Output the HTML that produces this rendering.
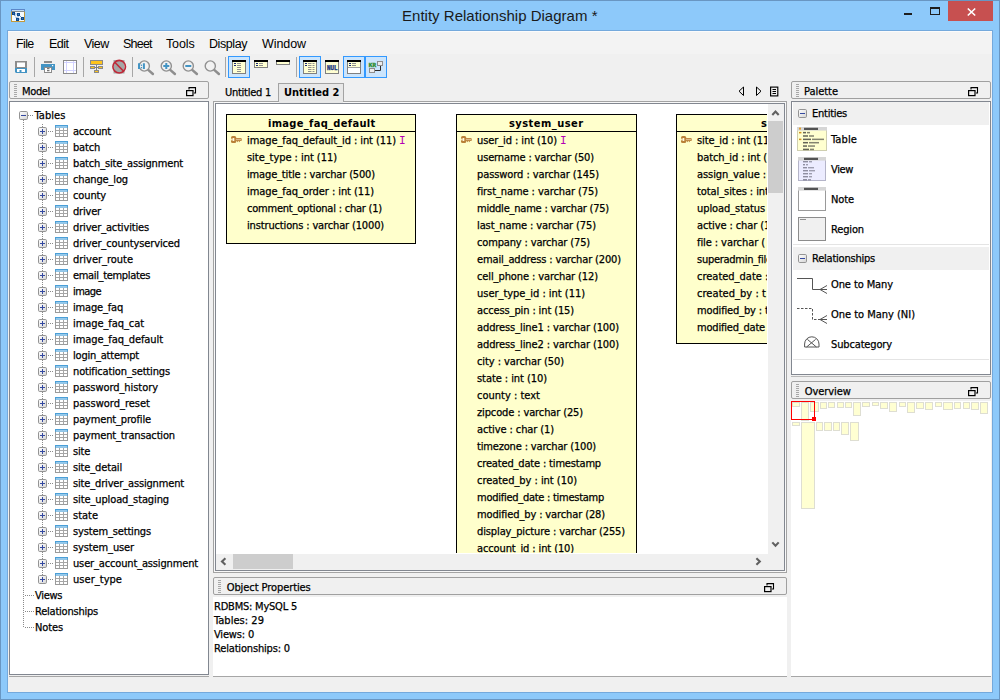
<!DOCTYPE html>
<html lang="en"><head><meta charset="utf-8"><title>Entity Relationship Diagram *</title>
<style>
html,body{margin:0;padding:0}
body{width:1000px;height:700px;overflow:hidden;background:#8dc9fa}
#win{position:absolute;left:0;top:0;width:1000px;height:700px;overflow:hidden;background:#8dc9fa;color:#000}
.a{position:absolute;box-sizing:border-box}
svg{position:absolute;overflow:visible}
.x{position:absolute;white-space:pre;color:#000}
.t{font:11px/13px "DejaVu Sans Condensed","Liberation Sans",sans-serif;-webkit-text-stroke:0.25px #000}
.tb{font:bold 11px/13px "DejaVu Sans Condensed","Liberation Sans",sans-serif}
.mo{font:11px/13px "DejaVu Sans Mono","Liberation Mono",monospace}
.m{font:12.5px/15px "Liberation Sans",sans-serif}
.ti{font:15px/18px "Liberation Sans",sans-serif;color:#1a1a1a}
.dt{border:1px solid #a0a0a0;border-radius:2px;background:#f0f0f0}
.fr{border:1px solid #828790;background:#fff}
.cb{border:1px solid #3399ff;background:#cce5fc}
.ent{border:1px solid #000;background:#ffffcc}
.ov{border:1px solid #deded2;background:#ffffd2}

</style></head><body>
<div id="win">
<div class="a" style="left:0px;top:0px;width:1000px;height:700px;border:1px solid #6996c2;"></div>
<div class="a" style="left:7px;top:30px;width:986px;height:663px;border:1px solid #74a9dc;"></div>
<div class="a" style="left:8px;top:31px;width:984px;height:661px;background:#f0f0f0;"></div>
<div class="a" style="left:8px;top:31px;width:984px;height:1px;background:#fbfbfb;"></div>
<div class="a" style="left:8px;top:32px;width:984px;height:22px;background:#f3f3f3;"></div>
<svg style="left:11px;top:9px" width="14" height="13" viewBox="0 0 14 13">
<rect x="0.5" y="2.5" width="13" height="10" fill="#f4fbff" stroke="#c49a3c"/>
<rect x="0" y="0" width="14" height="2.6" fill="#5b86c8"/>
<rect x="1" y="1" width="12" height="0.9" fill="#cfe6fa"/>
<path d="M2.5 4.5 L6.5 10.5 M7.5 5.5 L11.5 9.5 M2.5 4.5 L7.5 5.5 M7.5 5.5 L6.5 10.5 M6.5 10.5 L11.5 9.5" stroke="#0a4a90" stroke-width="0.9" stroke-dasharray="1 1" fill="none"/>
<g fill="#fff" stroke="#0a4a90" stroke-width="1.2"><rect x="1.6" y="3.6" width="1.8" height="1.8"/><rect x="6.6" y="4.6" width="1.8" height="1.8"/><rect x="5.6" y="9.6" width="1.8" height="1.8"/><rect x="10.6" y="8.6" width="1.8" height="1.8"/></g>
</svg>
<span class="x ti" style="left:402px;top:7px;letter-spacing:0.014px;">Entity Relationship Diagram *</span>
<div class="a" style="left:904px;top:13px;width:8px;height:2px;background:#1e1e1e;"></div>
<div class="a" style="left:930px;top:7px;width:10px;height:8px;border:1px solid #1e1e1e;border-top-width:2px;"></div>
<div class="a" style="left:948px;top:1px;width:45px;height:20px;background:#c75050;"></div>
<svg style="left:967px;top:8px" width="9" height="8" viewBox="0 0 9 8"><path d="M0.8 0.5 L8.2 7.5 M8.2 0.5 L0.8 7.5" stroke="#fff" stroke-width="1.6" fill="none"/></svg>
<span class="x m" style="left:16px;top:37px;letter-spacing:-0.639px;">File</span>
<span class="x m" style="left:49px;top:37px;letter-spacing:-0.512px;">Edit</span>
<span class="x m" style="left:84px;top:37px;letter-spacing:-0.569px;">View</span>
<span class="x m" style="left:123px;top:37px;letter-spacing:-0.774px;">Sheet</span>
<span class="x m" style="left:166px;top:37px;letter-spacing:-0.138px;">Tools</span>
<span class="x m" style="left:209px;top:37px;letter-spacing:-0.429px;">Display</span>
<span class="x m" style="left:262px;top:37px;letter-spacing:-0.078px;">Window</span>
<div class="a" style="left:34px;top:57px;width:1px;height:20px;background:#a7a7a7;"></div>
<div class="a" style="left:83px;top:57px;width:1px;height:20px;background:#a7a7a7;"></div>
<div class="a" style="left:132px;top:57px;width:1px;height:20px;background:#a7a7a7;"></div>
<div class="a" style="left:225px;top:57px;width:1px;height:20px;background:#a7a7a7;"></div>
<div class="a" style="left:296px;top:57px;width:1px;height:20px;background:#a7a7a7;"></div>
<div class="a cb" style="left:228px;top:56px;width:22px;height:22px"></div>
<div class="a cb" style="left:299px;top:56px;width:22px;height:22px"></div>
<div class="a cb" style="left:343px;top:56px;width:22px;height:22px"></div>
<div class="a cb" style="left:365px;top:56px;width:22px;height:22px"></div>
<svg style="left:15px;top:61px" width="12" height="12" viewBox="0 0 12 12">
<rect x="0" y="0" width="12" height="7" fill="#8c8c8c"/><rect x="2" y="1.5" width="8" height="4.5" fill="#fff"/>
<path d="M0 7 H12 V12 H1 L0 11 Z" fill="#4394c4"/><rect x="2" y="8" width="8" height="3" fill="#fff"/><rect x="4.5" y="9" width="2" height="2" fill="#4394c4"/></svg>
<svg style="left:41px;top:61px" width="14" height="12" viewBox="0 0 14 12">
<rect x="3" y="0" width="8" height="2" fill="#8c8c8c"/><rect x="0" y="3" width="14" height="6" fill="#4394c4"/>
<rect x="11" y="4" width="1.2" height="1.2" fill="#fff"/>
<rect x="3.5" y="6.5" width="7" height="5" fill="#fff" stroke="#8c8c8c"/><rect x="6" y="7.2" width="2.5" height="1" fill="#555"/><rect x="6" y="9.2" width="2.5" height="1" fill="#555"/></svg>
<svg style="left:63px;top:60px" width="14" height="14" viewBox="0 0 14 14">
<rect x="0.5" y="0.5" width="13" height="13" fill="#fff" stroke="#8a8a8a"/>
<path d="M3.5 1 V13 M10.5 1 V13 M1 2.5 H13 M1 10.5 H13" stroke="#d2d2ff" stroke-width="1"/></svg>
<svg style="left:90px;top:60px" width="13" height="13" viewBox="0 0 13 13">
<path d="M6.5 5 V10 M4 7.5 H9" stroke="#808080" stroke-width="1" fill="none"/>
<rect x="0.5" y="0.5" width="12" height="4" fill="#ffc41c" stroke="#8a8a8a"/>
<rect x="0.5" y="6.5" width="4" height="2" fill="#ffc41c" stroke="#8a8a8a"/>
<rect x="8.5" y="6.5" width="4" height="2" fill="#ffc41c" stroke="#8a8a8a"/>
<rect x="4.5" y="10.5" width="4" height="2" fill="#ffc41c" stroke="#8a8a8a"/></svg>
<svg style="left:112px;top:59px" width="15" height="15" viewBox="0 0 15 15">
<rect x="1.5" y="1" width="11" height="13.5" fill="#a6a6a6"/>
<circle cx="7.2" cy="7.7" r="6.3" fill="none" stroke="#bf2838" stroke-width="1.6"/>
<path d="M2.8 3.2 L11.6 12.2" stroke="#bf2838" stroke-width="1.6"/></svg>
<svg style="left:136px;top:58px" width="20" height="18" viewBox="0 0 20 18">
<path d="M12.2 11.9 L16.9 16" stroke="#8e8e8e" stroke-width="2.5" stroke-linecap="round"/>
<circle cx="8.3" cy="8" r="5.1" fill="#f2f2f2" stroke="#919191" stroke-width="1.4"/><path d="M3 5.2 V11 M7.9 5.2 V11" stroke="#4394c4" stroke-width="2" fill="none"/><rect x="4.8" y="6.6" width="1.3" height="1.3" fill="#4394c4"/><rect x="4.8" y="9" width="1.3" height="1.3" fill="#4394c4"/></svg>
<svg style="left:158px;top:58px" width="20" height="18" viewBox="0 0 20 18">
<path d="M12.2 11.9 L16.9 16" stroke="#8e8e8e" stroke-width="2.5" stroke-linecap="round"/>
<circle cx="8.3" cy="8" r="5.1" fill="#f2f2f2" stroke="#919191" stroke-width="1.4"/><path d="M5.3 8 H11.3 M8.3 5 V11" stroke="#4394c4" stroke-width="2" fill="none"/></svg>
<svg style="left:180px;top:58px" width="20" height="18" viewBox="0 0 20 18">
<path d="M12.2 11.9 L16.9 16" stroke="#8e8e8e" stroke-width="2.5" stroke-linecap="round"/>
<circle cx="8.3" cy="8" r="5.1" fill="#f2f2f2" stroke="#919191" stroke-width="1.4"/><path d="M5.3 8 H11.3" stroke="#4394c4" stroke-width="2" fill="none"/></svg>
<svg style="left:202px;top:58px" width="20" height="18" viewBox="0 0 20 18">
<path d="M12.2 11.9 L16.9 16" stroke="#8e8e8e" stroke-width="2.5" stroke-linecap="round"/>
<circle cx="8.3" cy="8" r="5.1" fill="#f2f2f2" stroke="#919191" stroke-width="1.4"/></svg>
<svg style="left:232px;top:60px" width="14" height="14" viewBox="0 0 14 14"><rect x="0.5" y="1.5" width="13" height="12" fill="#ffffd2" stroke="#808080"/><rect x="0" y="0" width="14" height="2" fill="#000"/><rect x="2" y="3.0" width="2" height="1" fill="#1a2a7a"/><rect x="5" y="3.0" width="4" height="1" fill="#909090"/><rect x="2" y="5.0" width="2" height="1" fill="#1a2a7a"/><rect x="5" y="5.0" width="4" height="1" fill="#909090"/><rect x="5" y="7.0" width="4" height="1" fill="#909090"/><rect x="5" y="9.0" width="4" height="1" fill="#909090"/><rect x="5" y="11.0" width="4" height="1" fill="#909090"/></svg>
<svg style="left:254px;top:60px" width="14" height="8" viewBox="0 0 14 8"><rect x="0.5" y="1.5" width="13" height="6" fill="#ffffd2" stroke="#808080"/><rect x="0" y="0" width="14" height="2" fill="#000"/><rect x="2" y="3.0" width="2" height="1" fill="#1a2a7a"/><rect x="5" y="3.0" width="4" height="1" fill="#909090"/><rect x="2" y="5.0" width="2" height="1" fill="#1a2a7a"/><rect x="5" y="5.0" width="4" height="1" fill="#909090"/></svg>
<svg style="left:276px;top:60px" width="14" height="5" viewBox="0 0 14 5"><rect x="0.5" y="1.5" width="13" height="3" fill="#ffffd2" stroke="#808080"/><rect x="0" y="0" width="14" height="2" fill="#000"/></svg>
<svg style="left:303px;top:60px" width="14" height="14" viewBox="0 0 14 14"><rect x="0.5" y="1.5" width="13" height="12" fill="#ffffd2" stroke="#808080"/><rect x="0" y="0" width="14" height="2" fill="#000"/><rect x="2" y="3.0" width="2" height="1" fill="#1a2a7a"/><rect x="5" y="3.0" width="3.5" height="1" fill="#909090"/><rect x="9.5" y="3.0" width="2" height="1" fill="#909090"/><rect x="2" y="5.0" width="2" height="1" fill="#1a2a7a"/><rect x="5" y="5.0" width="3.5" height="1" fill="#909090"/><rect x="9.5" y="5.0" width="2" height="1" fill="#909090"/><rect x="5" y="7.0" width="3.5" height="1" fill="#909090"/><rect x="9.5" y="7.0" width="2" height="1" fill="#909090"/><rect x="5" y="9.0" width="3.5" height="1" fill="#909090"/><rect x="9.5" y="9.0" width="2" height="1" fill="#909090"/><rect x="5" y="11.0" width="3.5" height="1" fill="#909090"/><rect x="9.5" y="11.0" width="2" height="1" fill="#909090"/></svg>
<svg style="left:325px;top:60px" width="14" height="14" viewBox="0 0 14 14"><rect x="0.5" y="1.5" width="13" height="12" fill="#ffffd2" stroke="#808080"/><rect x="0" y="0" width="14" height="2" fill="#000"/><text x="2" y="10" font-family="DejaVu Sans Mono,Liberation Mono,monospace" font-weight="bold" font-size="6.5" fill="#1a3580" stroke="#1a3580" stroke-width="0.35" textLength="10.4" lengthAdjust="spacingAndGlyphs">NUL</text></svg>
<svg style="left:347px;top:60px" width="14" height="14" viewBox="0 0 14 14"><rect x="0.5" y="1.5" width="13" height="12" fill="#ffffd2" stroke="#808080"/><rect x="1" y="7" width="12" height="6" fill="#fff"/><path d="M1 7.5 H13" stroke="#a0a0a0" stroke-width="1"/><rect x="0" y="0" width="14" height="2" fill="#000"/><rect x="2" y="3.0" width="2" height="1" fill="#1a2a7a"/><rect x="5" y="3.0" width="4" height="1" fill="#909090"/><rect x="2" y="5.0" width="2" height="1" fill="#1a2a7a"/><rect x="5" y="5.0" width="4" height="1" fill="#909090"/></svg>
<svg style="left:368px;top:60px" width="16" height="14" viewBox="0 0 16 14">
<path d="M7 10.5 H12.5 V5.5" stroke="#2a2a2a" stroke-width="1" fill="none"/>
<rect x="9.5" y="1.5" width="5" height="4" fill="#ececec" stroke="#8e8e8e"/>
<rect x="1.5" y="8.5" width="5" height="4" fill="#ececec" stroke="#8e8e8e"/>
<text x="0.8" y="7" font-family="DejaVu Sans Mono,Liberation Mono,monospace" font-weight="bold" font-size="5.6" fill="#2a8a2a" stroke="#2a8a2a" stroke-width="0.3" textLength="7.4" lengthAdjust="spacingAndGlyphs">KR</text></svg>
<div class="a dt" style="left:9px;top:81px;width:200px;height:18px"></div>
<div class="a" style="left:14px;top:84px;width:3px;height:1px;background:#a8a8a8;"></div>
<div class="a" style="left:14px;top:86px;width:3px;height:1px;background:#a8a8a8;"></div>
<div class="a" style="left:14px;top:88px;width:3px;height:1px;background:#a8a8a8;"></div>
<div class="a" style="left:14px;top:90px;width:3px;height:1px;background:#a8a8a8;"></div>
<div class="a" style="left:14px;top:92px;width:3px;height:1px;background:#a8a8a8;"></div>
<div class="a" style="left:14px;top:94px;width:3px;height:1px;background:#a8a8a8;"></div>
<div class="a" style="left:14px;top:96px;width:3px;height:1px;background:#a8a8a8;"></div>
<span class="x t" style="left:22px;top:85px;letter-spacing:-0.344px;">Model</span>
<svg style="left:186px;top:87px" width="11" height="10" viewBox="0 0 11 10">
<path d="M3 2.4 V0.6 H9.5 V6 H8" stroke="#000" stroke-width="1.1" fill="none"/>
<rect x="0.6" y="3.6" width="6.4" height="5" fill="none" stroke="#000" stroke-width="1.2"/></svg>
<div class="a fr" style="left:9px;top:101px;width:200px;height:574px"></div>
<div class="a" style="left:23px;top:120px;width:1px;height:508px;background-image:linear-gradient(to bottom,#8a8a8a 50%,transparent 50%);background-size:1px 2px;"></div>
<svg style="left:19px;top:111px" width="9" height="9" viewBox="0 0 9 9"><defs><linearGradient id="g19_111" x1="0" y1="0" x2="1" y2="1"><stop offset="0" stop-color="#fff"/><stop offset="1" stop-color="#d4d4d4"/></linearGradient></defs><rect x="0.5" y="0.5" width="8" height="8" rx="1.2" fill="url(#g19_111)" stroke="#949494"/><path d="M2 4.5 H7" stroke="#3449a0" stroke-width="1"/></svg>
<div class="a" style="left:28px;top:115px;width:6px;height:1px;background-image:linear-gradient(to right,#8a8a8a 50%,transparent 50%);background-size:2px 1px;"></div>
<span class="x t" style="left:34.5px;top:109px;letter-spacing:0.070px;">Tables</span>
<div class="a" style="left:42px;top:124px;width:1px;height:456px;background-image:linear-gradient(to bottom,#8a8a8a 50%,transparent 50%);background-size:1px 2px;"></div>
<div class="a" style="left:47px;top:131px;width:6px;height:1px;background-image:linear-gradient(to right,#8a8a8a 50%,transparent 50%);background-size:2px 1px;background-position:1px 0;"></div>
<svg style="left:38px;top:127px" width="9" height="9" viewBox="0 0 9 9"><defs><linearGradient id="g38_127" x1="0" y1="0" x2="1" y2="1"><stop offset="0" stop-color="#fff"/><stop offset="1" stop-color="#d4d4d4"/></linearGradient></defs><rect x="0.5" y="0.5" width="8" height="8" rx="1.2" fill="url(#g38_127)" stroke="#949494"/><path d="M2 4.5 H7" stroke="#3449a0" stroke-width="1"/><path d="M4.5 2 V7" stroke="#3449a0" stroke-width="1"/></svg>
<svg style="left:55px;top:125px" width="13" height="12" viewBox="0 0 13 12">
<rect x="0.5" y="0.5" width="12" height="11" fill="#fff" stroke="#9b9b9b"/>
<rect x="0" y="0" width="13" height="2.6" fill="#4a9fd8"/><rect x="1" y="1" width="11" height="0.8" fill="#a9d4f0"/>
<path d="M4.5 3 V11 M8.5 3 V11 M1 5.5 H12 M1 8.5 H12" stroke="#a6a6a6" stroke-width="1"/></svg>
<span class="x t" style="left:73px;top:125px;letter-spacing:-0.205px;">account</span>
<div class="a" style="left:47px;top:147px;width:6px;height:1px;background-image:linear-gradient(to right,#8a8a8a 50%,transparent 50%);background-size:2px 1px;background-position:1px 0;"></div>
<svg style="left:38px;top:143px" width="9" height="9" viewBox="0 0 9 9"><defs><linearGradient id="g38_143" x1="0" y1="0" x2="1" y2="1"><stop offset="0" stop-color="#fff"/><stop offset="1" stop-color="#d4d4d4"/></linearGradient></defs><rect x="0.5" y="0.5" width="8" height="8" rx="1.2" fill="url(#g38_143)" stroke="#949494"/><path d="M2 4.5 H7" stroke="#3449a0" stroke-width="1"/><path d="M4.5 2 V7" stroke="#3449a0" stroke-width="1"/></svg>
<svg style="left:55px;top:141px" width="13" height="12" viewBox="0 0 13 12">
<rect x="0.5" y="0.5" width="12" height="11" fill="#fff" stroke="#9b9b9b"/>
<rect x="0" y="0" width="13" height="2.6" fill="#4a9fd8"/><rect x="1" y="1" width="11" height="0.8" fill="#a9d4f0"/>
<path d="M4.5 3 V11 M8.5 3 V11 M1 5.5 H12 M1 8.5 H12" stroke="#a6a6a6" stroke-width="1"/></svg>
<span class="x t" style="left:73px;top:141px;letter-spacing:-0.191px;">batch</span>
<div class="a" style="left:47px;top:163px;width:6px;height:1px;background-image:linear-gradient(to right,#8a8a8a 50%,transparent 50%);background-size:2px 1px;background-position:1px 0;"></div>
<svg style="left:38px;top:159px" width="9" height="9" viewBox="0 0 9 9"><defs><linearGradient id="g38_159" x1="0" y1="0" x2="1" y2="1"><stop offset="0" stop-color="#fff"/><stop offset="1" stop-color="#d4d4d4"/></linearGradient></defs><rect x="0.5" y="0.5" width="8" height="8" rx="1.2" fill="url(#g38_159)" stroke="#949494"/><path d="M2 4.5 H7" stroke="#3449a0" stroke-width="1"/><path d="M4.5 2 V7" stroke="#3449a0" stroke-width="1"/></svg>
<svg style="left:55px;top:157px" width="13" height="12" viewBox="0 0 13 12">
<rect x="0.5" y="0.5" width="12" height="11" fill="#fff" stroke="#9b9b9b"/>
<rect x="0" y="0" width="13" height="2.6" fill="#4a9fd8"/><rect x="1" y="1" width="11" height="0.8" fill="#a9d4f0"/>
<path d="M4.5 3 V11 M8.5 3 V11 M1 5.5 H12 M1 8.5 H12" stroke="#a6a6a6" stroke-width="1"/></svg>
<span class="x t" style="left:73px;top:157px;letter-spacing:-0.156px;">batch_site_assignment</span>
<div class="a" style="left:47px;top:179px;width:6px;height:1px;background-image:linear-gradient(to right,#8a8a8a 50%,transparent 50%);background-size:2px 1px;background-position:1px 0;"></div>
<svg style="left:38px;top:175px" width="9" height="9" viewBox="0 0 9 9"><defs><linearGradient id="g38_175" x1="0" y1="0" x2="1" y2="1"><stop offset="0" stop-color="#fff"/><stop offset="1" stop-color="#d4d4d4"/></linearGradient></defs><rect x="0.5" y="0.5" width="8" height="8" rx="1.2" fill="url(#g38_175)" stroke="#949494"/><path d="M2 4.5 H7" stroke="#3449a0" stroke-width="1"/><path d="M4.5 2 V7" stroke="#3449a0" stroke-width="1"/></svg>
<svg style="left:55px;top:173px" width="13" height="12" viewBox="0 0 13 12">
<rect x="0.5" y="0.5" width="12" height="11" fill="#fff" stroke="#9b9b9b"/>
<rect x="0" y="0" width="13" height="2.6" fill="#4a9fd8"/><rect x="1" y="1" width="11" height="0.8" fill="#a9d4f0"/>
<path d="M4.5 3 V11 M8.5 3 V11 M1 5.5 H12 M1 8.5 H12" stroke="#a6a6a6" stroke-width="1"/></svg>
<span class="x t" style="left:73px;top:173px;letter-spacing:-0.147px;">change_log</span>
<div class="a" style="left:47px;top:195px;width:6px;height:1px;background-image:linear-gradient(to right,#8a8a8a 50%,transparent 50%);background-size:2px 1px;background-position:1px 0;"></div>
<svg style="left:38px;top:191px" width="9" height="9" viewBox="0 0 9 9"><defs><linearGradient id="g38_191" x1="0" y1="0" x2="1" y2="1"><stop offset="0" stop-color="#fff"/><stop offset="1" stop-color="#d4d4d4"/></linearGradient></defs><rect x="0.5" y="0.5" width="8" height="8" rx="1.2" fill="url(#g38_191)" stroke="#949494"/><path d="M2 4.5 H7" stroke="#3449a0" stroke-width="1"/><path d="M4.5 2 V7" stroke="#3449a0" stroke-width="1"/></svg>
<svg style="left:55px;top:189px" width="13" height="12" viewBox="0 0 13 12">
<rect x="0.5" y="0.5" width="12" height="11" fill="#fff" stroke="#9b9b9b"/>
<rect x="0" y="0" width="13" height="2.6" fill="#4a9fd8"/><rect x="1" y="1" width="11" height="0.8" fill="#a9d4f0"/>
<path d="M4.5 3 V11 M8.5 3 V11 M1 5.5 H12 M1 8.5 H12" stroke="#a6a6a6" stroke-width="1"/></svg>
<span class="x t" style="left:73px;top:189px;letter-spacing:-0.130px;">county</span>
<div class="a" style="left:47px;top:211px;width:6px;height:1px;background-image:linear-gradient(to right,#8a8a8a 50%,transparent 50%);background-size:2px 1px;background-position:1px 0;"></div>
<svg style="left:38px;top:207px" width="9" height="9" viewBox="0 0 9 9"><defs><linearGradient id="g38_207" x1="0" y1="0" x2="1" y2="1"><stop offset="0" stop-color="#fff"/><stop offset="1" stop-color="#d4d4d4"/></linearGradient></defs><rect x="0.5" y="0.5" width="8" height="8" rx="1.2" fill="url(#g38_207)" stroke="#949494"/><path d="M2 4.5 H7" stroke="#3449a0" stroke-width="1"/><path d="M4.5 2 V7" stroke="#3449a0" stroke-width="1"/></svg>
<svg style="left:55px;top:205px" width="13" height="12" viewBox="0 0 13 12">
<rect x="0.5" y="0.5" width="12" height="11" fill="#fff" stroke="#9b9b9b"/>
<rect x="0" y="0" width="13" height="2.6" fill="#4a9fd8"/><rect x="1" y="1" width="11" height="0.8" fill="#a9d4f0"/>
<path d="M4.5 3 V11 M8.5 3 V11 M1 5.5 H12 M1 8.5 H12" stroke="#a6a6a6" stroke-width="1"/></svg>
<span class="x t" style="left:73px;top:205px;letter-spacing:-0.188px;">driver</span>
<div class="a" style="left:47px;top:227px;width:6px;height:1px;background-image:linear-gradient(to right,#8a8a8a 50%,transparent 50%);background-size:2px 1px;background-position:1px 0;"></div>
<svg style="left:38px;top:223px" width="9" height="9" viewBox="0 0 9 9"><defs><linearGradient id="g38_223" x1="0" y1="0" x2="1" y2="1"><stop offset="0" stop-color="#fff"/><stop offset="1" stop-color="#d4d4d4"/></linearGradient></defs><rect x="0.5" y="0.5" width="8" height="8" rx="1.2" fill="url(#g38_223)" stroke="#949494"/><path d="M2 4.5 H7" stroke="#3449a0" stroke-width="1"/><path d="M4.5 2 V7" stroke="#3449a0" stroke-width="1"/></svg>
<svg style="left:55px;top:221px" width="13" height="12" viewBox="0 0 13 12">
<rect x="0.5" y="0.5" width="12" height="11" fill="#fff" stroke="#9b9b9b"/>
<rect x="0" y="0" width="13" height="2.6" fill="#4a9fd8"/><rect x="1" y="1" width="11" height="0.8" fill="#a9d4f0"/>
<path d="M4.5 3 V11 M8.5 3 V11 M1 5.5 H12 M1 8.5 H12" stroke="#a6a6a6" stroke-width="1"/></svg>
<span class="x t" style="left:73px;top:221px;letter-spacing:-0.157px;">driver_activities</span>
<div class="a" style="left:47px;top:243px;width:6px;height:1px;background-image:linear-gradient(to right,#8a8a8a 50%,transparent 50%);background-size:2px 1px;background-position:1px 0;"></div>
<svg style="left:38px;top:239px" width="9" height="9" viewBox="0 0 9 9"><defs><linearGradient id="g38_239" x1="0" y1="0" x2="1" y2="1"><stop offset="0" stop-color="#fff"/><stop offset="1" stop-color="#d4d4d4"/></linearGradient></defs><rect x="0.5" y="0.5" width="8" height="8" rx="1.2" fill="url(#g38_239)" stroke="#949494"/><path d="M2 4.5 H7" stroke="#3449a0" stroke-width="1"/><path d="M4.5 2 V7" stroke="#3449a0" stroke-width="1"/></svg>
<svg style="left:55px;top:237px" width="13" height="12" viewBox="0 0 13 12">
<rect x="0.5" y="0.5" width="12" height="11" fill="#fff" stroke="#9b9b9b"/>
<rect x="0" y="0" width="13" height="2.6" fill="#4a9fd8"/><rect x="1" y="1" width="11" height="0.8" fill="#a9d4f0"/>
<path d="M4.5 3 V11 M8.5 3 V11 M1 5.5 H12 M1 8.5 H12" stroke="#a6a6a6" stroke-width="1"/></svg>
<span class="x t" style="left:73px;top:237px;letter-spacing:-0.123px;">driver_countyserviced</span>
<div class="a" style="left:47px;top:259px;width:6px;height:1px;background-image:linear-gradient(to right,#8a8a8a 50%,transparent 50%);background-size:2px 1px;background-position:1px 0;"></div>
<svg style="left:38px;top:255px" width="9" height="9" viewBox="0 0 9 9"><defs><linearGradient id="g38_255" x1="0" y1="0" x2="1" y2="1"><stop offset="0" stop-color="#fff"/><stop offset="1" stop-color="#d4d4d4"/></linearGradient></defs><rect x="0.5" y="0.5" width="8" height="8" rx="1.2" fill="url(#g38_255)" stroke="#949494"/><path d="M2 4.5 H7" stroke="#3449a0" stroke-width="1"/><path d="M4.5 2 V7" stroke="#3449a0" stroke-width="1"/></svg>
<svg style="left:55px;top:253px" width="13" height="12" viewBox="0 0 13 12">
<rect x="0.5" y="0.5" width="12" height="11" fill="#fff" stroke="#9b9b9b"/>
<rect x="0" y="0" width="13" height="2.6" fill="#4a9fd8"/><rect x="1" y="1" width="11" height="0.8" fill="#a9d4f0"/>
<path d="M4.5 3 V11 M8.5 3 V11 M1 5.5 H12 M1 8.5 H12" stroke="#a6a6a6" stroke-width="1"/></svg>
<span class="x t" style="left:73px;top:253px;letter-spacing:-0.016px;">driver_route</span>
<div class="a" style="left:47px;top:275px;width:6px;height:1px;background-image:linear-gradient(to right,#8a8a8a 50%,transparent 50%);background-size:2px 1px;background-position:1px 0;"></div>
<svg style="left:38px;top:271px" width="9" height="9" viewBox="0 0 9 9"><defs><linearGradient id="g38_271" x1="0" y1="0" x2="1" y2="1"><stop offset="0" stop-color="#fff"/><stop offset="1" stop-color="#d4d4d4"/></linearGradient></defs><rect x="0.5" y="0.5" width="8" height="8" rx="1.2" fill="url(#g38_271)" stroke="#949494"/><path d="M2 4.5 H7" stroke="#3449a0" stroke-width="1"/><path d="M4.5 2 V7" stroke="#3449a0" stroke-width="1"/></svg>
<svg style="left:55px;top:269px" width="13" height="12" viewBox="0 0 13 12">
<rect x="0.5" y="0.5" width="12" height="11" fill="#fff" stroke="#9b9b9b"/>
<rect x="0" y="0" width="13" height="2.6" fill="#4a9fd8"/><rect x="1" y="1" width="11" height="0.8" fill="#a9d4f0"/>
<path d="M4.5 3 V11 M8.5 3 V11 M1 5.5 H12 M1 8.5 H12" stroke="#a6a6a6" stroke-width="1"/></svg>
<span class="x t" style="left:73px;top:269px;letter-spacing:-0.339px;">email_templates</span>
<div class="a" style="left:47px;top:291px;width:6px;height:1px;background-image:linear-gradient(to right,#8a8a8a 50%,transparent 50%);background-size:2px 1px;background-position:1px 0;"></div>
<svg style="left:38px;top:287px" width="9" height="9" viewBox="0 0 9 9"><defs><linearGradient id="g38_287" x1="0" y1="0" x2="1" y2="1"><stop offset="0" stop-color="#fff"/><stop offset="1" stop-color="#d4d4d4"/></linearGradient></defs><rect x="0.5" y="0.5" width="8" height="8" rx="1.2" fill="url(#g38_287)" stroke="#949494"/><path d="M2 4.5 H7" stroke="#3449a0" stroke-width="1"/><path d="M4.5 2 V7" stroke="#3449a0" stroke-width="1"/></svg>
<svg style="left:55px;top:285px" width="13" height="12" viewBox="0 0 13 12">
<rect x="0.5" y="0.5" width="12" height="11" fill="#fff" stroke="#9b9b9b"/>
<rect x="0" y="0" width="13" height="2.6" fill="#4a9fd8"/><rect x="1" y="1" width="11" height="0.8" fill="#a9d4f0"/>
<path d="M4.5 3 V11 M8.5 3 V11 M1 5.5 H12 M1 8.5 H12" stroke="#a6a6a6" stroke-width="1"/></svg>
<span class="x t" style="left:73px;top:285px;letter-spacing:-0.569px;">image</span>
<div class="a" style="left:47px;top:307px;width:6px;height:1px;background-image:linear-gradient(to right,#8a8a8a 50%,transparent 50%);background-size:2px 1px;background-position:1px 0;"></div>
<svg style="left:38px;top:303px" width="9" height="9" viewBox="0 0 9 9"><defs><linearGradient id="g38_303" x1="0" y1="0" x2="1" y2="1"><stop offset="0" stop-color="#fff"/><stop offset="1" stop-color="#d4d4d4"/></linearGradient></defs><rect x="0.5" y="0.5" width="8" height="8" rx="1.2" fill="url(#g38_303)" stroke="#949494"/><path d="M2 4.5 H7" stroke="#3449a0" stroke-width="1"/><path d="M4.5 2 V7" stroke="#3449a0" stroke-width="1"/></svg>
<svg style="left:55px;top:301px" width="13" height="12" viewBox="0 0 13 12">
<rect x="0.5" y="0.5" width="12" height="11" fill="#fff" stroke="#9b9b9b"/>
<rect x="0" y="0" width="13" height="2.6" fill="#4a9fd8"/><rect x="1" y="1" width="11" height="0.8" fill="#a9d4f0"/>
<path d="M4.5 3 V11 M8.5 3 V11 M1 5.5 H12 M1 8.5 H12" stroke="#a6a6a6" stroke-width="1"/></svg>
<span class="x t" style="left:73px;top:301px;letter-spacing:-0.179px;">image_faq</span>
<div class="a" style="left:47px;top:323px;width:6px;height:1px;background-image:linear-gradient(to right,#8a8a8a 50%,transparent 50%);background-size:2px 1px;background-position:1px 0;"></div>
<svg style="left:38px;top:319px" width="9" height="9" viewBox="0 0 9 9"><defs><linearGradient id="g38_319" x1="0" y1="0" x2="1" y2="1"><stop offset="0" stop-color="#fff"/><stop offset="1" stop-color="#d4d4d4"/></linearGradient></defs><rect x="0.5" y="0.5" width="8" height="8" rx="1.2" fill="url(#g38_319)" stroke="#949494"/><path d="M2 4.5 H7" stroke="#3449a0" stroke-width="1"/><path d="M4.5 2 V7" stroke="#3449a0" stroke-width="1"/></svg>
<svg style="left:55px;top:317px" width="13" height="12" viewBox="0 0 13 12">
<rect x="0.5" y="0.5" width="12" height="11" fill="#fff" stroke="#9b9b9b"/>
<rect x="0" y="0" width="13" height="2.6" fill="#4a9fd8"/><rect x="1" y="1" width="11" height="0.8" fill="#a9d4f0"/>
<path d="M4.5 3 V11 M8.5 3 V11 M1 5.5 H12 M1 8.5 H12" stroke="#a6a6a6" stroke-width="1"/></svg>
<span class="x t" style="left:73px;top:317px;letter-spacing:-0.072px;">image_faq_cat</span>
<div class="a" style="left:47px;top:339px;width:6px;height:1px;background-image:linear-gradient(to right,#8a8a8a 50%,transparent 50%);background-size:2px 1px;background-position:1px 0;"></div>
<svg style="left:38px;top:335px" width="9" height="9" viewBox="0 0 9 9"><defs><linearGradient id="g38_335" x1="0" y1="0" x2="1" y2="1"><stop offset="0" stop-color="#fff"/><stop offset="1" stop-color="#d4d4d4"/></linearGradient></defs><rect x="0.5" y="0.5" width="8" height="8" rx="1.2" fill="url(#g38_335)" stroke="#949494"/><path d="M2 4.5 H7" stroke="#3449a0" stroke-width="1"/><path d="M4.5 2 V7" stroke="#3449a0" stroke-width="1"/></svg>
<svg style="left:55px;top:333px" width="13" height="12" viewBox="0 0 13 12">
<rect x="0.5" y="0.5" width="12" height="11" fill="#fff" stroke="#9b9b9b"/>
<rect x="0" y="0" width="13" height="2.6" fill="#4a9fd8"/><rect x="1" y="1" width="11" height="0.8" fill="#a9d4f0"/>
<path d="M4.5 3 V11 M8.5 3 V11 M1 5.5 H12 M1 8.5 H12" stroke="#a6a6a6" stroke-width="1"/></svg>
<span class="x t" style="left:73px;top:333px;letter-spacing:-0.081px;">image_faq_default</span>
<div class="a" style="left:47px;top:355px;width:6px;height:1px;background-image:linear-gradient(to right,#8a8a8a 50%,transparent 50%);background-size:2px 1px;background-position:1px 0;"></div>
<svg style="left:38px;top:351px" width="9" height="9" viewBox="0 0 9 9"><defs><linearGradient id="g38_351" x1="0" y1="0" x2="1" y2="1"><stop offset="0" stop-color="#fff"/><stop offset="1" stop-color="#d4d4d4"/></linearGradient></defs><rect x="0.5" y="0.5" width="8" height="8" rx="1.2" fill="url(#g38_351)" stroke="#949494"/><path d="M2 4.5 H7" stroke="#3449a0" stroke-width="1"/><path d="M4.5 2 V7" stroke="#3449a0" stroke-width="1"/></svg>
<svg style="left:55px;top:349px" width="13" height="12" viewBox="0 0 13 12">
<rect x="0.5" y="0.5" width="12" height="11" fill="#fff" stroke="#9b9b9b"/>
<rect x="0" y="0" width="13" height="2.6" fill="#4a9fd8"/><rect x="1" y="1" width="11" height="0.8" fill="#a9d4f0"/>
<path d="M4.5 3 V11 M8.5 3 V11 M1 5.5 H12 M1 8.5 H12" stroke="#a6a6a6" stroke-width="1"/></svg>
<span class="x t" style="left:73px;top:349px;letter-spacing:-0.214px;">login_attempt</span>
<div class="a" style="left:47px;top:371px;width:6px;height:1px;background-image:linear-gradient(to right,#8a8a8a 50%,transparent 50%);background-size:2px 1px;background-position:1px 0;"></div>
<svg style="left:38px;top:367px" width="9" height="9" viewBox="0 0 9 9"><defs><linearGradient id="g38_367" x1="0" y1="0" x2="1" y2="1"><stop offset="0" stop-color="#fff"/><stop offset="1" stop-color="#d4d4d4"/></linearGradient></defs><rect x="0.5" y="0.5" width="8" height="8" rx="1.2" fill="url(#g38_367)" stroke="#949494"/><path d="M2 4.5 H7" stroke="#3449a0" stroke-width="1"/><path d="M4.5 2 V7" stroke="#3449a0" stroke-width="1"/></svg>
<svg style="left:55px;top:365px" width="13" height="12" viewBox="0 0 13 12">
<rect x="0.5" y="0.5" width="12" height="11" fill="#fff" stroke="#9b9b9b"/>
<rect x="0" y="0" width="13" height="2.6" fill="#4a9fd8"/><rect x="1" y="1" width="11" height="0.8" fill="#a9d4f0"/>
<path d="M4.5 3 V11 M8.5 3 V11 M1 5.5 H12 M1 8.5 H12" stroke="#a6a6a6" stroke-width="1"/></svg>
<span class="x t" style="left:73px;top:365px;letter-spacing:-0.147px;">notification_settings</span>
<div class="a" style="left:47px;top:387px;width:6px;height:1px;background-image:linear-gradient(to right,#8a8a8a 50%,transparent 50%);background-size:2px 1px;background-position:1px 0;"></div>
<svg style="left:38px;top:383px" width="9" height="9" viewBox="0 0 9 9"><defs><linearGradient id="g38_383" x1="0" y1="0" x2="1" y2="1"><stop offset="0" stop-color="#fff"/><stop offset="1" stop-color="#d4d4d4"/></linearGradient></defs><rect x="0.5" y="0.5" width="8" height="8" rx="1.2" fill="url(#g38_383)" stroke="#949494"/><path d="M2 4.5 H7" stroke="#3449a0" stroke-width="1"/><path d="M4.5 2 V7" stroke="#3449a0" stroke-width="1"/></svg>
<svg style="left:55px;top:381px" width="13" height="12" viewBox="0 0 13 12">
<rect x="0.5" y="0.5" width="12" height="11" fill="#fff" stroke="#9b9b9b"/>
<rect x="0" y="0" width="13" height="2.6" fill="#4a9fd8"/><rect x="1" y="1" width="11" height="0.8" fill="#a9d4f0"/>
<path d="M4.5 3 V11 M8.5 3 V11 M1 5.5 H12 M1 8.5 H12" stroke="#a6a6a6" stroke-width="1"/></svg>
<span class="x t" style="left:73px;top:381px;letter-spacing:-0.060px;">password_history</span>
<div class="a" style="left:47px;top:403px;width:6px;height:1px;background-image:linear-gradient(to right,#8a8a8a 50%,transparent 50%);background-size:2px 1px;background-position:1px 0;"></div>
<svg style="left:38px;top:399px" width="9" height="9" viewBox="0 0 9 9"><defs><linearGradient id="g38_399" x1="0" y1="0" x2="1" y2="1"><stop offset="0" stop-color="#fff"/><stop offset="1" stop-color="#d4d4d4"/></linearGradient></defs><rect x="0.5" y="0.5" width="8" height="8" rx="1.2" fill="url(#g38_399)" stroke="#949494"/><path d="M2 4.5 H7" stroke="#3449a0" stroke-width="1"/><path d="M4.5 2 V7" stroke="#3449a0" stroke-width="1"/></svg>
<svg style="left:55px;top:397px" width="13" height="12" viewBox="0 0 13 12">
<rect x="0.5" y="0.5" width="12" height="11" fill="#fff" stroke="#9b9b9b"/>
<rect x="0" y="0" width="13" height="2.6" fill="#4a9fd8"/><rect x="1" y="1" width="11" height="0.8" fill="#a9d4f0"/>
<path d="M4.5 3 V11 M8.5 3 V11 M1 5.5 H12 M1 8.5 H12" stroke="#a6a6a6" stroke-width="1"/></svg>
<span class="x t" style="left:73px;top:397px;letter-spacing:0.003px;">password_reset</span>
<div class="a" style="left:47px;top:419px;width:6px;height:1px;background-image:linear-gradient(to right,#8a8a8a 50%,transparent 50%);background-size:2px 1px;background-position:1px 0;"></div>
<svg style="left:38px;top:415px" width="9" height="9" viewBox="0 0 9 9"><defs><linearGradient id="g38_415" x1="0" y1="0" x2="1" y2="1"><stop offset="0" stop-color="#fff"/><stop offset="1" stop-color="#d4d4d4"/></linearGradient></defs><rect x="0.5" y="0.5" width="8" height="8" rx="1.2" fill="url(#g38_415)" stroke="#949494"/><path d="M2 4.5 H7" stroke="#3449a0" stroke-width="1"/><path d="M4.5 2 V7" stroke="#3449a0" stroke-width="1"/></svg>
<svg style="left:55px;top:413px" width="13" height="12" viewBox="0 0 13 12">
<rect x="0.5" y="0.5" width="12" height="11" fill="#fff" stroke="#9b9b9b"/>
<rect x="0" y="0" width="13" height="2.6" fill="#4a9fd8"/><rect x="1" y="1" width="11" height="0.8" fill="#a9d4f0"/>
<path d="M4.5 3 V11 M8.5 3 V11 M1 5.5 H12 M1 8.5 H12" stroke="#a6a6a6" stroke-width="1"/></svg>
<span class="x t" style="left:73px;top:413px;letter-spacing:-0.152px;">payment_profile</span>
<div class="a" style="left:47px;top:435px;width:6px;height:1px;background-image:linear-gradient(to right,#8a8a8a 50%,transparent 50%);background-size:2px 1px;background-position:1px 0;"></div>
<svg style="left:38px;top:431px" width="9" height="9" viewBox="0 0 9 9"><defs><linearGradient id="g38_431" x1="0" y1="0" x2="1" y2="1"><stop offset="0" stop-color="#fff"/><stop offset="1" stop-color="#d4d4d4"/></linearGradient></defs><rect x="0.5" y="0.5" width="8" height="8" rx="1.2" fill="url(#g38_431)" stroke="#949494"/><path d="M2 4.5 H7" stroke="#3449a0" stroke-width="1"/><path d="M4.5 2 V7" stroke="#3449a0" stroke-width="1"/></svg>
<svg style="left:55px;top:429px" width="13" height="12" viewBox="0 0 13 12">
<rect x="0.5" y="0.5" width="12" height="11" fill="#fff" stroke="#9b9b9b"/>
<rect x="0" y="0" width="13" height="2.6" fill="#4a9fd8"/><rect x="1" y="1" width="11" height="0.8" fill="#a9d4f0"/>
<path d="M4.5 3 V11 M8.5 3 V11 M1 5.5 H12 M1 8.5 H12" stroke="#a6a6a6" stroke-width="1"/></svg>
<span class="x t" style="left:73px;top:429px;letter-spacing:-0.155px;">payment_transaction</span>
<div class="a" style="left:47px;top:451px;width:6px;height:1px;background-image:linear-gradient(to right,#8a8a8a 50%,transparent 50%);background-size:2px 1px;background-position:1px 0;"></div>
<svg style="left:38px;top:447px" width="9" height="9" viewBox="0 0 9 9"><defs><linearGradient id="g38_447" x1="0" y1="0" x2="1" y2="1"><stop offset="0" stop-color="#fff"/><stop offset="1" stop-color="#d4d4d4"/></linearGradient></defs><rect x="0.5" y="0.5" width="8" height="8" rx="1.2" fill="url(#g38_447)" stroke="#949494"/><path d="M2 4.5 H7" stroke="#3449a0" stroke-width="1"/><path d="M4.5 2 V7" stroke="#3449a0" stroke-width="1"/></svg>
<svg style="left:55px;top:445px" width="13" height="12" viewBox="0 0 13 12">
<rect x="0.5" y="0.5" width="12" height="11" fill="#fff" stroke="#9b9b9b"/>
<rect x="0" y="0" width="13" height="2.6" fill="#4a9fd8"/><rect x="1" y="1" width="11" height="0.8" fill="#a9d4f0"/>
<path d="M4.5 3 V11 M8.5 3 V11 M1 5.5 H12 M1 8.5 H12" stroke="#a6a6a6" stroke-width="1"/></svg>
<span class="x t" style="left:73px;top:445px;letter-spacing:-0.219px;">site</span>
<div class="a" style="left:47px;top:467px;width:6px;height:1px;background-image:linear-gradient(to right,#8a8a8a 50%,transparent 50%);background-size:2px 1px;background-position:1px 0;"></div>
<svg style="left:38px;top:463px" width="9" height="9" viewBox="0 0 9 9"><defs><linearGradient id="g38_463" x1="0" y1="0" x2="1" y2="1"><stop offset="0" stop-color="#fff"/><stop offset="1" stop-color="#d4d4d4"/></linearGradient></defs><rect x="0.5" y="0.5" width="8" height="8" rx="1.2" fill="url(#g38_463)" stroke="#949494"/><path d="M2 4.5 H7" stroke="#3449a0" stroke-width="1"/><path d="M4.5 2 V7" stroke="#3449a0" stroke-width="1"/></svg>
<svg style="left:55px;top:461px" width="13" height="12" viewBox="0 0 13 12">
<rect x="0.5" y="0.5" width="12" height="11" fill="#fff" stroke="#9b9b9b"/>
<rect x="0" y="0" width="13" height="2.6" fill="#4a9fd8"/><rect x="1" y="1" width="11" height="0.8" fill="#a9d4f0"/>
<path d="M4.5 3 V11 M8.5 3 V11 M1 5.5 H12 M1 8.5 H12" stroke="#a6a6a6" stroke-width="1"/></svg>
<span class="x t" style="left:73px;top:461px;letter-spacing:-0.149px;">site_detail</span>
<div class="a" style="left:47px;top:483px;width:6px;height:1px;background-image:linear-gradient(to right,#8a8a8a 50%,transparent 50%);background-size:2px 1px;background-position:1px 0;"></div>
<svg style="left:38px;top:479px" width="9" height="9" viewBox="0 0 9 9"><defs><linearGradient id="g38_479" x1="0" y1="0" x2="1" y2="1"><stop offset="0" stop-color="#fff"/><stop offset="1" stop-color="#d4d4d4"/></linearGradient></defs><rect x="0.5" y="0.5" width="8" height="8" rx="1.2" fill="url(#g38_479)" stroke="#949494"/><path d="M2 4.5 H7" stroke="#3449a0" stroke-width="1"/><path d="M4.5 2 V7" stroke="#3449a0" stroke-width="1"/></svg>
<svg style="left:55px;top:477px" width="13" height="12" viewBox="0 0 13 12">
<rect x="0.5" y="0.5" width="12" height="11" fill="#fff" stroke="#9b9b9b"/>
<rect x="0" y="0" width="13" height="2.6" fill="#4a9fd8"/><rect x="1" y="1" width="11" height="0.8" fill="#a9d4f0"/>
<path d="M4.5 3 V11 M8.5 3 V11 M1 5.5 H12 M1 8.5 H12" stroke="#a6a6a6" stroke-width="1"/></svg>
<span class="x t" style="left:73px;top:477px;letter-spacing:-0.157px;">site_driver_assignment</span>
<div class="a" style="left:47px;top:499px;width:6px;height:1px;background-image:linear-gradient(to right,#8a8a8a 50%,transparent 50%);background-size:2px 1px;background-position:1px 0;"></div>
<svg style="left:38px;top:495px" width="9" height="9" viewBox="0 0 9 9"><defs><linearGradient id="g38_495" x1="0" y1="0" x2="1" y2="1"><stop offset="0" stop-color="#fff"/><stop offset="1" stop-color="#d4d4d4"/></linearGradient></defs><rect x="0.5" y="0.5" width="8" height="8" rx="1.2" fill="url(#g38_495)" stroke="#949494"/><path d="M2 4.5 H7" stroke="#3449a0" stroke-width="1"/><path d="M4.5 2 V7" stroke="#3449a0" stroke-width="1"/></svg>
<svg style="left:55px;top:493px" width="13" height="12" viewBox="0 0 13 12">
<rect x="0.5" y="0.5" width="12" height="11" fill="#fff" stroke="#9b9b9b"/>
<rect x="0" y="0" width="13" height="2.6" fill="#4a9fd8"/><rect x="1" y="1" width="11" height="0.8" fill="#a9d4f0"/>
<path d="M4.5 3 V11 M8.5 3 V11 M1 5.5 H12 M1 8.5 H12" stroke="#a6a6a6" stroke-width="1"/></svg>
<span class="x t" style="left:73px;top:493px;letter-spacing:-0.114px;">site_upload_staging</span>
<div class="a" style="left:47px;top:515px;width:6px;height:1px;background-image:linear-gradient(to right,#8a8a8a 50%,transparent 50%);background-size:2px 1px;background-position:1px 0;"></div>
<svg style="left:38px;top:511px" width="9" height="9" viewBox="0 0 9 9"><defs><linearGradient id="g38_511" x1="0" y1="0" x2="1" y2="1"><stop offset="0" stop-color="#fff"/><stop offset="1" stop-color="#d4d4d4"/></linearGradient></defs><rect x="0.5" y="0.5" width="8" height="8" rx="1.2" fill="url(#g38_511)" stroke="#949494"/><path d="M2 4.5 H7" stroke="#3449a0" stroke-width="1"/><path d="M4.5 2 V7" stroke="#3449a0" stroke-width="1"/></svg>
<svg style="left:55px;top:509px" width="13" height="12" viewBox="0 0 13 12">
<rect x="0.5" y="0.5" width="12" height="11" fill="#fff" stroke="#9b9b9b"/>
<rect x="0" y="0" width="13" height="2.6" fill="#4a9fd8"/><rect x="1" y="1" width="11" height="0.8" fill="#a9d4f0"/>
<path d="M4.5 3 V11 M8.5 3 V11 M1 5.5 H12 M1 8.5 H12" stroke="#a6a6a6" stroke-width="1"/></svg>
<span class="x t" style="left:73px;top:509px;letter-spacing:-0.016px;">state</span>
<div class="a" style="left:47px;top:531px;width:6px;height:1px;background-image:linear-gradient(to right,#8a8a8a 50%,transparent 50%);background-size:2px 1px;background-position:1px 0;"></div>
<svg style="left:38px;top:527px" width="9" height="9" viewBox="0 0 9 9"><defs><linearGradient id="g38_527" x1="0" y1="0" x2="1" y2="1"><stop offset="0" stop-color="#fff"/><stop offset="1" stop-color="#d4d4d4"/></linearGradient></defs><rect x="0.5" y="0.5" width="8" height="8" rx="1.2" fill="url(#g38_527)" stroke="#949494"/><path d="M2 4.5 H7" stroke="#3449a0" stroke-width="1"/><path d="M4.5 2 V7" stroke="#3449a0" stroke-width="1"/></svg>
<svg style="left:55px;top:525px" width="13" height="12" viewBox="0 0 13 12">
<rect x="0.5" y="0.5" width="12" height="11" fill="#fff" stroke="#9b9b9b"/>
<rect x="0" y="0" width="13" height="2.6" fill="#4a9fd8"/><rect x="1" y="1" width="11" height="0.8" fill="#a9d4f0"/>
<path d="M4.5 3 V11 M8.5 3 V11 M1 5.5 H12 M1 8.5 H12" stroke="#a6a6a6" stroke-width="1"/></svg>
<span class="x t" style="left:73px;top:525px;letter-spacing:-0.147px;">system_settings</span>
<div class="a" style="left:47px;top:547px;width:6px;height:1px;background-image:linear-gradient(to right,#8a8a8a 50%,transparent 50%);background-size:2px 1px;background-position:1px 0;"></div>
<svg style="left:38px;top:543px" width="9" height="9" viewBox="0 0 9 9"><defs><linearGradient id="g38_543" x1="0" y1="0" x2="1" y2="1"><stop offset="0" stop-color="#fff"/><stop offset="1" stop-color="#d4d4d4"/></linearGradient></defs><rect x="0.5" y="0.5" width="8" height="8" rx="1.2" fill="url(#g38_543)" stroke="#949494"/><path d="M2 4.5 H7" stroke="#3449a0" stroke-width="1"/><path d="M4.5 2 V7" stroke="#3449a0" stroke-width="1"/></svg>
<svg style="left:55px;top:541px" width="13" height="12" viewBox="0 0 13 12">
<rect x="0.5" y="0.5" width="12" height="11" fill="#fff" stroke="#9b9b9b"/>
<rect x="0" y="0" width="13" height="2.6" fill="#4a9fd8"/><rect x="1" y="1" width="11" height="0.8" fill="#a9d4f0"/>
<path d="M4.5 3 V11 M8.5 3 V11 M1 5.5 H12 M1 8.5 H12" stroke="#a6a6a6" stroke-width="1"/></svg>
<span class="x t" style="left:73px;top:541px;letter-spacing:-0.119px;">system_user</span>
<div class="a" style="left:47px;top:563px;width:6px;height:1px;background-image:linear-gradient(to right,#8a8a8a 50%,transparent 50%);background-size:2px 1px;background-position:1px 0;"></div>
<svg style="left:38px;top:559px" width="9" height="9" viewBox="0 0 9 9"><defs><linearGradient id="g38_559" x1="0" y1="0" x2="1" y2="1"><stop offset="0" stop-color="#fff"/><stop offset="1" stop-color="#d4d4d4"/></linearGradient></defs><rect x="0.5" y="0.5" width="8" height="8" rx="1.2" fill="url(#g38_559)" stroke="#949494"/><path d="M2 4.5 H7" stroke="#3449a0" stroke-width="1"/><path d="M4.5 2 V7" stroke="#3449a0" stroke-width="1"/></svg>
<svg style="left:55px;top:557px" width="13" height="12" viewBox="0 0 13 12">
<rect x="0.5" y="0.5" width="12" height="11" fill="#fff" stroke="#9b9b9b"/>
<rect x="0" y="0" width="13" height="2.6" fill="#4a9fd8"/><rect x="1" y="1" width="11" height="0.8" fill="#a9d4f0"/>
<path d="M4.5 3 V11 M8.5 3 V11 M1 5.5 H12 M1 8.5 H12" stroke="#a6a6a6" stroke-width="1"/></svg>
<span class="x t" style="left:73px;top:557px;letter-spacing:-0.151px;">user_account_assignment</span>
<div class="a" style="left:47px;top:579px;width:6px;height:1px;background-image:linear-gradient(to right,#8a8a8a 50%,transparent 50%);background-size:2px 1px;background-position:1px 0;"></div>
<svg style="left:38px;top:575px" width="9" height="9" viewBox="0 0 9 9"><defs><linearGradient id="g38_575" x1="0" y1="0" x2="1" y2="1"><stop offset="0" stop-color="#fff"/><stop offset="1" stop-color="#d4d4d4"/></linearGradient></defs><rect x="0.5" y="0.5" width="8" height="8" rx="1.2" fill="url(#g38_575)" stroke="#949494"/><path d="M2 4.5 H7" stroke="#3449a0" stroke-width="1"/><path d="M4.5 2 V7" stroke="#3449a0" stroke-width="1"/></svg>
<svg style="left:55px;top:573px" width="13" height="12" viewBox="0 0 13 12">
<rect x="0.5" y="0.5" width="12" height="11" fill="#fff" stroke="#9b9b9b"/>
<rect x="0" y="0" width="13" height="2.6" fill="#4a9fd8"/><rect x="1" y="1" width="11" height="0.8" fill="#a9d4f0"/>
<path d="M4.5 3 V11 M8.5 3 V11 M1 5.5 H12 M1 8.5 H12" stroke="#a6a6a6" stroke-width="1"/></svg>
<span class="x t" style="left:73px;top:573px;letter-spacing:0.040px;">user_type</span>
<div class="a" style="left:24px;top:595px;width:10px;height:1px;background-image:linear-gradient(to right,#8a8a8a 50%,transparent 50%);background-size:2px 1px;background-position:1px 0;"></div>
<span class="x t" style="left:35px;top:589px;letter-spacing:-0.325px;">Views</span>
<div class="a" style="left:24px;top:611px;width:10px;height:1px;background-image:linear-gradient(to right,#8a8a8a 50%,transparent 50%);background-size:2px 1px;background-position:1px 0;"></div>
<span class="x t" style="left:35px;top:605px;letter-spacing:-0.221px;">Relationships</span>
<div class="a" style="left:24px;top:627px;width:10px;height:1px;background-image:linear-gradient(to right,#8a8a8a 50%,transparent 50%);background-size:2px 1px;background-position:1px 0;"></div>
<span class="x t" style="left:35px;top:621px;letter-spacing:-0.119px;">Notes</span>
<div class="a" style="left:213px;top:101px;width:574px;height:472px;border:1px solid #a3a3a3;"></div>
<div class="a" style="left:214px;top:102px;width:572px;height:470px;border:1px solid #f8f8f8;"></div>
<div class="a" style="left:278px;top:83px;width:66px;height:18px;background:#e8e8e8;border:1px solid #a3a3a3;border-bottom:none;"></div>
<div class="a" style="left:279px;top:101px;width:64px;height:2px;background:#e8e8e8;"></div>
<span class="x t" style="left:225px;top:86px;letter-spacing:-0.259px;">Untitled 1</span>
<span class="x tb" style="left:284px;top:86px;letter-spacing:0.005px;">Untitled 2</span>
<svg style="left:738px;top:86px" width="42" height="11" viewBox="0 0 42 11">
<path d="M5.5 1 V9.5 L1 5.2 Z" fill="none" stroke="#000" stroke-width="1"/>
<path d="M18.5 1 V9.5 L23 5.2 Z" fill="none" stroke="#000" stroke-width="1"/>
<rect x="32.6" y="1.1" width="7.2" height="8.8" fill="none" stroke="#000" stroke-width="1.15"/>
<path d="M34.5 3.5 H38 M34.5 5.5 H38 M34.5 7.5 H38" stroke="#000" stroke-width="1"/></svg>
<div class="a fr" style="left:215px;top:103px;width:570px;height:468px;background:#fff"></div>
<div class="a" id="vp" style="left:216px;top:104px;width:551px;height:449px;background:#fff;overflow:hidden">
<div class="a ent" style="left:10px;top:10px;width:190px;height:130px"></div>
<div class="a" style="left:10px;top:27px;width:190px;height:1px;background:#000;"></div>
<span class="x tb" style="left:52px;top:13px;letter-spacing:0.319px;">image_faq_default</span>
<svg style="left:15px;top:32px" width="12" height="7" viewBox="0 0 12 7">
<rect x="0" y="0" width="5.2" height="7" rx="1.6" fill="#b98038"/>
<rect x="4.4" y="2.1" width="6.4" height="3" rx="1.2" fill="#c08a48"/>
<rect x="5" y="3" width="5" height="1" fill="#dcb888"/>
<rect x="5.8" y="4.8" width="1" height="1.3" fill="#b98038"/><rect x="7.8" y="4.8" width="1" height="1.3" fill="#b98038"/>
<rect x="1.7" y="2" width="1.6" height="3" fill="#fff6d8"/><rect x="0" y="2.6" width="1.8" height="1.8" fill="#f3e2b8"/></svg>
<span class="x mo" style="left:183px;top:30px;color:#b400b4;">I</span>
<span class="x t" style="left:31px;top:30px;letter-spacing:-0.076px;">image_faq_default_id : int (11)</span>
<span class="x t" style="left:31px;top:47px;letter-spacing:-0.045px;">site_type : int (11)</span>
<span class="x t" style="left:31px;top:64px;letter-spacing:-0.152px;">image_title : varchar (500)</span>
<span class="x t" style="left:31px;top:81px;letter-spacing:-0.073px;">image_faq_order : int (11)</span>
<span class="x t" style="left:31px;top:98px;letter-spacing:-0.211px;">comment_optional : char (1)</span>
<span class="x t" style="left:31px;top:115px;letter-spacing:-0.145px;">instructions : varchar (1000)</span>
<div class="a ent" style="left:240px;top:10px;width:181px;height:470px"></div>
<div class="a" style="left:240px;top:27px;width:181px;height:1px;background:#000;"></div>
<span class="x tb" style="left:293px;top:13px;letter-spacing:0.456px;">system_user</span>
<svg style="left:245px;top:32px" width="12" height="7" viewBox="0 0 12 7">
<rect x="0" y="0" width="5.2" height="7" rx="1.6" fill="#b98038"/>
<rect x="4.4" y="2.1" width="6.4" height="3" rx="1.2" fill="#c08a48"/>
<rect x="5" y="3" width="5" height="1" fill="#dcb888"/>
<rect x="5.8" y="4.8" width="1" height="1.3" fill="#b98038"/><rect x="7.8" y="4.8" width="1" height="1.3" fill="#b98038"/>
<rect x="1.7" y="2" width="1.6" height="3" fill="#fff6d8"/><rect x="0" y="2.6" width="1.8" height="1.8" fill="#f3e2b8"/></svg>
<span class="x mo" style="left:344px;top:30px;color:#b400b4;">I</span>
<span class="x t" style="left:261px;top:30px;letter-spacing:-0.086px;">user_id : int (10)</span>
<span class="x t" style="left:261px;top:47px;letter-spacing:-0.136px;">username : varchar (50)</span>
<span class="x t" style="left:261px;top:64px;letter-spacing:-0.080px;">password : varchar (145)</span>
<span class="x t" style="left:261px;top:81px;letter-spacing:-0.081px;">first_name : varchar (75)</span>
<span class="x t" style="left:261px;top:98px;letter-spacing:-0.211px;">middle_name : varchar (75)</span>
<span class="x t" style="left:261px;top:115px;letter-spacing:-0.105px;">last_name : varchar (75)</span>
<span class="x t" style="left:261px;top:132px;letter-spacing:-0.149px;">company : varchar (75)</span>
<span class="x t" style="left:261px;top:149px;letter-spacing:-0.140px;">email_address : varchar (200)</span>
<span class="x t" style="left:261px;top:166px;letter-spacing:-0.105px;">cell_phone : varchar (12)</span>
<span class="x t" style="left:261px;top:183px;letter-spacing:-0.026px;">user_type_id : int (11)</span>
<span class="x t" style="left:261px;top:200px;letter-spacing:-0.124px;">access_pin : int (15)</span>
<span class="x t" style="left:261px;top:217px;letter-spacing:-0.101px;">address_line1 : varchar (100)</span>
<span class="x t" style="left:261px;top:234px;letter-spacing:-0.101px;">address_line2 : varchar (100)</span>
<span class="x t" style="left:261px;top:251px;letter-spacing:-0.084px;">city : varchar (50)</span>
<span class="x t" style="left:261px;top:268px;letter-spacing:-0.065px;">state : int (10)</span>
<span class="x t" style="left:261px;top:285px;letter-spacing:0.007px;">county : text</span>
<span class="x t" style="left:261px;top:302px;letter-spacing:-0.126px;">zipcode : varchar (25)</span>
<span class="x t" style="left:261px;top:319px;letter-spacing:-0.100px;">active : char (1)</span>
<span class="x t" style="left:261px;top:336px;letter-spacing:-0.164px;">timezone : varchar (100)</span>
<span class="x t" style="left:261px;top:353px;letter-spacing:-0.165px;">created_date : timestamp</span>
<span class="x t" style="left:261px;top:370px;letter-spacing:-0.036px;">created_by : int (10)</span>
<span class="x t" style="left:261px;top:387px;letter-spacing:-0.264px;">modified_date : timestamp</span>
<span class="x t" style="left:261px;top:404px;letter-spacing:-0.119px;">modified_by : varchar (28)</span>
<span class="x t" style="left:261px;top:421px;letter-spacing:-0.116px;">display_picture : varchar (255)</span>
<span class="x t" style="left:261px;top:438px;letter-spacing:-0.114px;">account_id : int (10)</span>
<span class="x t" style="left:261px;top:455px;letter-spacing:-0.068px;">status : int (1)</span>
<div class="a ent" style="left:460px;top:10px;width:240px;height:230px"></div>
<div class="a" style="left:460px;top:27px;width:240px;height:1px;background:#000;"></div>
<span class="x tb" style="left:545px;top:13px;">site_upload_staging</span>
<svg style="left:465px;top:32px" width="12" height="7" viewBox="0 0 12 7">
<rect x="0" y="0" width="5.2" height="7" rx="1.6" fill="#b98038"/>
<rect x="4.4" y="2.1" width="6.4" height="3" rx="1.2" fill="#c08a48"/>
<rect x="5" y="3" width="5" height="1" fill="#dcb888"/>
<rect x="5.8" y="4.8" width="1" height="1.3" fill="#b98038"/><rect x="7.8" y="4.8" width="1" height="1.3" fill="#b98038"/>
<rect x="1.7" y="2" width="1.6" height="3" fill="#fff6d8"/><rect x="0" y="2.6" width="1.8" height="1.8" fill="#f3e2b8"/></svg>
<span class="x mo" style="left:560px;top:30px;color:#b400b4;">I</span>
<span class="x t" style="left:481px;top:30px;letter-spacing:-0.105px;">site_id : int (1</span>
<span class="x t" style="left:547px;top:30px;letter-spacing:-0.086px;">1)</span>
<span class="x t" style="left:481px;top:47px;letter-spacing:-0.091px;">batch_id : int (</span>
<span class="x t" style="left:553px;top:47px;letter-spacing:-0.151px;">11)</span>
<span class="x t" style="left:481px;top:64px;letter-spacing:-0.083px;">assign_value :</span>
<span class="x t" style="left:552px;top:64px;letter-spacing:-0.091px;"> varchar (50)</span>
<span class="x t" style="left:481px;top:81px;letter-spacing:-0.078px;">total_sites : in</span>
<span class="x t" style="left:549px;top:81px;letter-spacing:-0.057px;">t (11)</span>
<span class="x t" style="left:481px;top:98px;letter-spacing:-0.082px;">upload_status</span>
<span class="x t" style="left:551px;top:98px;letter-spacing:-0.045px;"> : varchar (50)</span>
<span class="x t" style="left:481px;top:115px;letter-spacing:-0.103px;">active : char (</span>
<span class="x t" style="left:548px;top:115px;letter-spacing:-0.086px;">1)</span>
<span class="x t" style="left:481px;top:132px;letter-spacing:-0.081px;">file : varchar (</span>
<span class="x t" style="left:551px;top:132px;letter-spacing:-0.188px;">255)</span>
<span class="x t" style="left:481px;top:149px;letter-spacing:-0.273px;">superadmin_fil</span>
<span class="x t" style="left:550px;top:149px;letter-spacing:-0.062px;">e : varchar (255)</span>
<span class="x t" style="left:481px;top:166px;letter-spacing:-0.007px;">created_date </span>
<span class="x t" style="left:549px;top:166px;letter-spacing:-0.352px;">: timestamp</span>
<span class="x t" style="left:481px;top:183px;letter-spacing:0.052px;">created_by : t</span>
<span class="x t" style="left:552px;top:183px;letter-spacing:-0.564px;">imestamp</span>
<span class="x t" style="left:481px;top:200px;letter-spacing:-0.146px;">modified_by : </span>
<span class="x t" style="left:549px;top:200px;letter-spacing:-0.488px;">timestamp</span>
<span class="x t" style="left:481px;top:217px;letter-spacing:-0.201px;">modified_date</span>
<span class="x t" style="left:551px;top:217px;letter-spacing:-0.335px;"> : timestamp</span>
</div>
<div class="a" style="left:768px;top:104px;width:16px;height:466px;background:#f0f0f0;"></div>
<div class="a" style="left:768px;top:121px;width:15px;height:72px;background:#cdcdcd;"></div>
<svg style="left:771px;top:109px" width="9" height="8" viewBox="0 0 9 8"><path d="M1.3 6 L4.5 2.6 L7.7 6" stroke="#606060" stroke-width="2.1" fill="none" stroke-linejoin="miter"/></svg>
<svg style="left:771px;top:540px" width="9" height="8" viewBox="0 0 9 8"><path d="M1.3 2.4 L4.5 5.8 L7.7 2.4" stroke="#606060" stroke-width="2.1" fill="none" stroke-linejoin="miter"/></svg>
<div class="a" style="left:216px;top:554px;width:552px;height:16px;background:#f0f0f0;"></div>
<div class="a" style="left:233px;top:554px;width:60px;height:15px;background:#cdcdcd;"></div>
<svg style="left:219px;top:557px" width="8" height="9" viewBox="0 0 8 9"><path d="M6.4 1.3 L3 4.5 L6.4 7.7" stroke="#606060" stroke-width="2.1" fill="none" stroke-linejoin="miter"/></svg>
<svg style="left:754px;top:557px" width="8" height="9" viewBox="0 0 8 9"><path d="M2.4 1.3 L5.8 4.5 L2.4 7.7" stroke="#606060" stroke-width="2.1" fill="none" stroke-linejoin="miter"/></svg>
<div class="a dt" style="left:213px;top:577px;width:574px;height:18px"></div>
<div class="a" style="left:218px;top:580px;width:3px;height:1px;background:#a8a8a8;"></div>
<div class="a" style="left:218px;top:582px;width:3px;height:1px;background:#a8a8a8;"></div>
<div class="a" style="left:218px;top:584px;width:3px;height:1px;background:#a8a8a8;"></div>
<div class="a" style="left:218px;top:586px;width:3px;height:1px;background:#a8a8a8;"></div>
<div class="a" style="left:218px;top:588px;width:3px;height:1px;background:#a8a8a8;"></div>
<div class="a" style="left:218px;top:590px;width:3px;height:1px;background:#a8a8a8;"></div>
<div class="a" style="left:218px;top:592px;width:3px;height:1px;background:#a8a8a8;"></div>
<span class="x t" style="left:226.7px;top:581px;letter-spacing:-0.079px;">Object Properties</span>
<svg style="left:764px;top:583px" width="11" height="10" viewBox="0 0 11 10">
<path d="M3 2.4 V0.6 H9.5 V6 H8" stroke="#000" stroke-width="1.1" fill="none"/>
<rect x="0.6" y="3.6" width="6.4" height="5" fill="none" stroke="#000" stroke-width="1.2"/></svg>
<div class="a" style="left:213px;top:597px;width:574px;height:79px;background:#fff;"></div>
<span class="x t" style="left:214px;top:600px;letter-spacing:-0.215px;">RDBMS: MySQL 5</span>
<span class="x t" style="left:214px;top:614px;letter-spacing:0.036px;">Tables: 29</span>
<span class="x t" style="left:214px;top:628px;letter-spacing:-0.174px;">Views: 0</span>
<span class="x t" style="left:214px;top:642px;letter-spacing:-0.165px;">Relationships: 0</span>
<div class="a" style="left:9px;top:676px;width:200px;height:1px;background:#a6a6a6;"></div>
<div class="a" style="left:213px;top:676px;width:574px;height:1px;background:#a6a6a6;"></div>
<div class="a" style="left:791px;top:676px;width:200px;height:1px;background:#a6a6a6;"></div>
<div class="a dt" style="left:791px;top:81px;width:200px;height:18px"></div>
<div class="a" style="left:796px;top:84px;width:3px;height:1px;background:#a8a8a8;"></div>
<div class="a" style="left:796px;top:86px;width:3px;height:1px;background:#a8a8a8;"></div>
<div class="a" style="left:796px;top:88px;width:3px;height:1px;background:#a8a8a8;"></div>
<div class="a" style="left:796px;top:90px;width:3px;height:1px;background:#a8a8a8;"></div>
<div class="a" style="left:796px;top:92px;width:3px;height:1px;background:#a8a8a8;"></div>
<div class="a" style="left:796px;top:94px;width:3px;height:1px;background:#a8a8a8;"></div>
<div class="a" style="left:796px;top:96px;width:3px;height:1px;background:#a8a8a8;"></div>
<span class="x t" style="left:804px;top:85px;letter-spacing:-0.033px;">Palette</span>
<svg style="left:968px;top:87px" width="11" height="10" viewBox="0 0 11 10">
<path d="M3 2.4 V0.6 H9.5 V6 H8" stroke="#000" stroke-width="1.1" fill="none"/>
<rect x="0.6" y="3.6" width="6.4" height="5" fill="none" stroke="#000" stroke-width="1.2"/></svg>
<div class="a fr" style="left:791px;top:101px;width:200px;height:274px"></div>
<div class="a" style="left:793px;top:102px;width:196px;height:23px;background:#f0f0f0;"></div>
<svg style="left:798px;top:109px" width="9" height="9" viewBox="0 0 9 9"><defs><linearGradient id="g798_109" x1="0" y1="0" x2="1" y2="1"><stop offset="0" stop-color="#fff"/><stop offset="1" stop-color="#d4d4d4"/></linearGradient></defs><rect x="0.5" y="0.5" width="8" height="8" rx="1.2" fill="url(#g798_109)" stroke="#949494"/><path d="M2 4.5 H7" stroke="#3449a0" stroke-width="1"/></svg>
<span class="x t" style="left:812px;top:107px;letter-spacing:-0.254px;">Entities</span>
<svg style="left:797px;top:127px" width="30" height="24" viewBox="0 0 30 24"><rect x="0.5" y="0.5" width="29" height="23" fill="#ffffd0" stroke="#cfcfb0"/><rect x="0" y="0" width="30" height="3.6" fill="#d6d6d6"/><rect x="7.0" y="0.8" width="14" height="2.2" fill="#3c3c3c" opacity="0.85"/><rect x="2" y="0.6" width="2" height="2" fill="#e0a030"/><rect x="6" y="4.90" width="3" height="1.5" fill="#303030" opacity="0.75"/><rect x="10" y="4.90" width="3" height="1.5" fill="#303030" opacity="0.6"/><rect x="2" y="4.90" width="2.4" height="1.5" fill="#d09020"/><rect x="6" y="8.25" width="5" height="1.5" fill="#303030" opacity="0.75"/><rect x="12" y="8.25" width="5" height="1.5" fill="#303030" opacity="0.6"/><rect x="6" y="11.60" width="8" height="1.5" fill="#303030" opacity="0.75"/><rect x="15" y="11.60" width="12" height="1.5" fill="#303030" opacity="0.6"/><rect x="2" y="11.60" width="2.4" height="1.5" fill="#d09020"/><rect x="6" y="14.95" width="5" height="1.5" fill="#303030" opacity="0.75"/><rect x="12" y="14.95" width="10" height="1.5" fill="#303030" opacity="0.6"/><rect x="6" y="18.30" width="4" height="1.5" fill="#303030" opacity="0.75"/><rect x="11" y="18.30" width="7" height="1.5" fill="#303030" opacity="0.6"/><rect x="6" y="21.65" width="6" height="1.5" fill="#303030" opacity="0.75"/><rect x="13" y="21.65" width="4" height="1.5" fill="#303030" opacity="0.6"/></svg>
<svg style="left:798px;top:157px" width="28" height="24" viewBox="0 0 28 24"><rect x="0.5" y="0.5" width="27" height="23" fill="#ececff" stroke="#b4b4c8"/><rect x="0" y="0" width="28" height="3.6" fill="#d6d6d6"/><rect x="6.0" y="0.8" width="14" height="2.2" fill="#3c3c3c" opacity="0.85"/><rect x="5" y="4.00" width="5" height="1.4" fill="#505060" opacity="0.6"/><rect x="11" y="4.00" width="3" height="1.4" fill="#505060" opacity="0.5"/><rect x="5" y="7.00" width="2" height="1.4" fill="#505060" opacity="0.6"/><rect x="8" y="7.00" width="2" height="1.4" fill="#505060" opacity="0.5"/><rect x="5" y="10.00" width="4" height="1.4" fill="#505060" opacity="0.6"/><rect x="10" y="10.00" width="6" height="1.4" fill="#505060" opacity="0.5"/><rect x="5" y="13.00" width="5" height="1.4" fill="#505060" opacity="0.6"/><rect x="11" y="13.00" width="6" height="1.4" fill="#505060" opacity="0.5"/><rect x="5" y="16.00" width="5" height="1.4" fill="#505060" opacity="0.6"/><rect x="11" y="16.00" width="3" height="1.4" fill="#505060" opacity="0.5"/><rect x="5" y="19.00" width="5" height="1.4" fill="#505060" opacity="0.6"/><rect x="11" y="19.00" width="3" height="1.4" fill="#505060" opacity="0.5"/><rect x="5" y="22.00" width="4" height="1.4" fill="#505060" opacity="0.6"/><rect x="10" y="22.00" width="3" height="1.4" fill="#505060" opacity="0.5"/></svg>
<svg style="left:798px;top:187px" width="28" height="24" viewBox="0 0 28 24"><rect x="0.5" y="0.5" width="27" height="23" fill="#ffffff" stroke="#9a9a9a"/><rect x="0" y="0" width="28" height="3.6" fill="#d6d6d6"/><rect x="6.0" y="0.8" width="14" height="2.2" fill="#3c3c3c" opacity="0.85"/></svg>
<svg style="left:798px;top:217px" width="28" height="24" viewBox="0 0 28 24"><rect x="0.5" y="0.5" width="27" height="23" fill="#f0f0f0" stroke="#8c8c8c"/><path d="M2 2.5 H8" stroke="#909090" stroke-width="1"/></svg>
<span class="x t" style="left:831px;top:133px;letter-spacing:0.116px;">Table</span>
<span class="x t" style="left:831px;top:163px;letter-spacing:-0.367px;">View</span>
<span class="x t" style="left:831px;top:193px;letter-spacing:-0.109px;">Note</span>
<span class="x t" style="left:831px;top:223px;letter-spacing:-0.141px;">Region</span>
<div class="a" style="left:793px;top:244px;width:196px;height:1px;background:#e4e4e4;"></div>
<div class="a" style="left:793px;top:247px;width:196px;height:23px;background:#f0f0f0;"></div>
<svg style="left:798px;top:254px" width="9" height="9" viewBox="0 0 9 9"><defs><linearGradient id="g798_254" x1="0" y1="0" x2="1" y2="1"><stop offset="0" stop-color="#fff"/><stop offset="1" stop-color="#d4d4d4"/></linearGradient></defs><rect x="0.5" y="0.5" width="8" height="8" rx="1.2" fill="url(#g798_254)" stroke="#949494"/><path d="M2 4.5 H7" stroke="#3449a0" stroke-width="1"/></svg>
<span class="x t" style="left:812px;top:252px;letter-spacing:-0.221px;">Relationships</span>
<svg style="left:797px;top:274px" width="32" height="22" viewBox="0 0 32 22">
<path d="M0 4.5 H15.5 V15.5 H30 M23 15.5 L30 11.5 M23 15.5 L30 19.5" stroke="#555" stroke-width="1" fill="none"/></svg>
<svg style="left:797px;top:304px" width="32" height="22" viewBox="0 0 32 22">
<path d="M0 4.5 H15.5 V15.5 H22" stroke="#555" stroke-width="1" fill="none" stroke-dasharray="2.5 1.5"/>
<path d="M22 15.5 H30 M23 15.5 L30 11.5 M23 15.5 L30 19.5" stroke="#555" stroke-width="1" fill="none"/></svg>
<svg style="left:804px;top:336px" width="16" height="12" viewBox="0 0 16 12">
<path d="M0.6 11 V8 A7.2 7.2 0 0 1 15 8 V11 Z" fill="#fff" stroke="#555" stroke-width="1"/>
<path d="M3.4 3.4 L12.4 11 M11.6 3.4 L2.6 11" stroke="#555" stroke-width="1"/></svg>
<span class="x t" style="left:831px;top:278px;letter-spacing:-0.101px;">One to Many</span>
<span class="x t" style="left:831px;top:308px;letter-spacing:-0.019px;">One to Many (NI)</span>
<span class="x t" style="left:831px;top:338px;letter-spacing:-0.143px;">Subcategory</span>
<div class="a" style="left:793px;top:359px;width:196px;height:1px;background:#e4e4e4;"></div>
<div class="a" style="left:791px;top:376px;width:200px;height:1px;background:#b9b9b9;"></div>
<div class="a dt" style="left:791px;top:381px;width:200px;height:18px"></div>
<div class="a" style="left:796px;top:384px;width:3px;height:1px;background:#a8a8a8;"></div>
<div class="a" style="left:796px;top:386px;width:3px;height:1px;background:#a8a8a8;"></div>
<div class="a" style="left:796px;top:388px;width:3px;height:1px;background:#a8a8a8;"></div>
<div class="a" style="left:796px;top:390px;width:3px;height:1px;background:#a8a8a8;"></div>
<div class="a" style="left:796px;top:392px;width:3px;height:1px;background:#a8a8a8;"></div>
<div class="a" style="left:796px;top:394px;width:3px;height:1px;background:#a8a8a8;"></div>
<div class="a" style="left:796px;top:396px;width:3px;height:1px;background:#a8a8a8;"></div>
<span class="x t" style="left:804.7px;top:385px;letter-spacing:-0.074px;">Overview</span>
<svg style="left:968px;top:387px" width="11" height="10" viewBox="0 0 11 10">
<path d="M3 2.4 V0.6 H9.5 V6 H8" stroke="#000" stroke-width="1.1" fill="none"/>
<rect x="0.6" y="3.6" width="6.4" height="5" fill="none" stroke="#000" stroke-width="1.2"/></svg>
<div class="a" style="left:791px;top:401px;width:200px;height:275px;background:#fff;"></div>
<div class="a ov" style="left:792px;top:402px;width:8px;height:5px"></div>
<div class="a ov" style="left:801px;top:402px;width:8px;height:19px"></div>
<div class="a ov" style="left:810px;top:402px;width:9px;height:10px"></div>
<div class="a ov" style="left:820px;top:402px;width:7px;height:7px"></div>
<div class="a ov" style="left:828px;top:402px;width:7px;height:6px"></div>
<div class="a ov" style="left:837px;top:402px;width:7px;height:6px"></div>
<div class="a ov" style="left:845px;top:402px;width:7px;height:6px"></div>
<div class="a ov" style="left:853px;top:402px;width:8px;height:14px"></div>
<div class="a ov" style="left:862px;top:402px;width:8px;height:5px"></div>
<div class="a ov" style="left:872px;top:402px;width:7px;height:4px"></div>
<div class="a ov" style="left:880px;top:402px;width:8px;height:7px"></div>
<div class="a ov" style="left:889px;top:402px;width:8px;height:10px"></div>
<div class="a ov" style="left:899px;top:402px;width:7px;height:5px"></div>
<div class="a ov" style="left:907px;top:402px;width:8px;height:11px"></div>
<div class="a ov" style="left:916px;top:402px;width:8px;height:7px"></div>
<div class="a ov" style="left:925px;top:402px;width:8px;height:8px"></div>
<div class="a ov" style="left:935px;top:402px;width:7px;height:5px"></div>
<div class="a ov" style="left:943px;top:402px;width:10px;height:8px"></div>
<div class="a ov" style="left:954px;top:402px;width:7px;height:7px"></div>
<div class="a ov" style="left:963px;top:402px;width:7px;height:7px"></div>
<div class="a ov" style="left:971px;top:402px;width:8px;height:8px"></div>
<div class="a ov" style="left:980px;top:402px;width:8px;height:12px"></div>
<div class="a ov" style="left:792px;top:422px;width:8px;height:4px"></div>
<div class="a ov" style="left:801px;top:422px;width:14px;height:87px"></div>
<div class="a ov" style="left:816px;top:422px;width:7px;height:9px"></div>
<div class="a ov" style="left:824px;top:422px;width:8px;height:9px"></div>
<div class="a ov" style="left:833px;top:422px;width:7px;height:9px"></div>
<div class="a ov" style="left:841px;top:422px;width:8px;height:13px"></div>
<div class="a ov" style="left:850px;top:422px;width:9px;height:19px"></div>
<div class="a" style="left:791px;top:401px;width:24px;height:19px;border:1px solid #f00;"></div>
<div class="a" style="left:812px;top:417px;width:4px;height:4px;background:#f00;"></div>
</div>
</body></html>
